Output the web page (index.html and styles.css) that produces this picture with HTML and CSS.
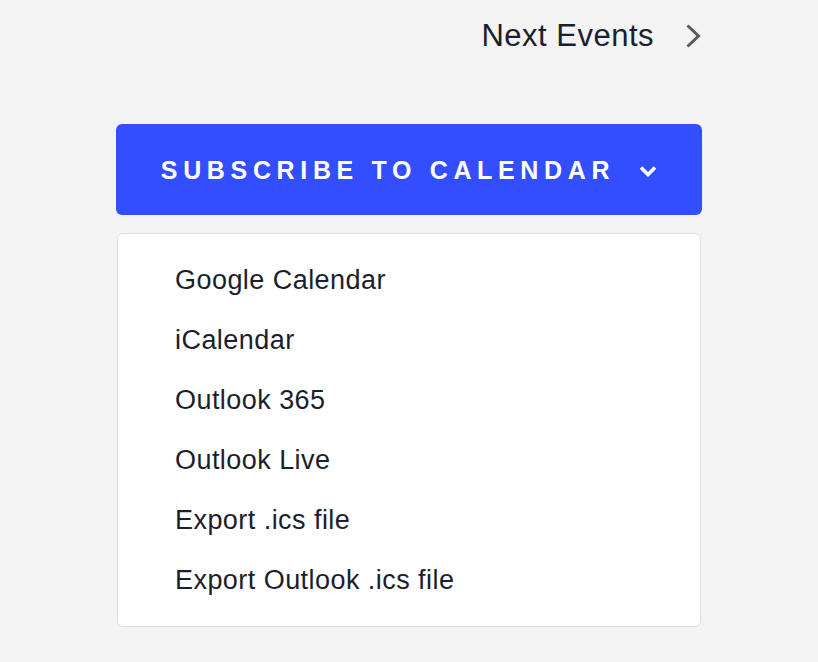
FILE: index.html
```html
<!DOCTYPE html>
<html lang="en">
<head>
<meta charset="utf-8">
<title>Subscribe to calendar</title>
<link rel="stylesheet" href="styles.css">
</head>
<body>
<div class="wrap">
  <nav class="nav">
    <a class="next" href="#">Next Events</a>
    <svg class="next-icon" width="16" height="26" viewBox="0 0 16 26" aria-hidden="true">
      <polyline points="2.5,2.5 13.5,13 2.5,23.5" fill="none" stroke="#5b5b5b" stroke-width="3"/>
    </svg>
  </nav>
  <button class="subscribe" type="button">
    <span class="subscribe-label">Subscribe to calendar</span>
    <svg class="caret" width="18" height="12" viewBox="0 0 18 12" aria-hidden="true">
      <polyline points="2,2.5 9,9.5 16,2.5" fill="none" stroke="#ffffff" stroke-width="3.6"/>
    </svg>
  </button>
  <ul class="menu">
    <li class="menu-item">Google Calendar</li>
    <li class="menu-item">iCalendar</li>
    <li class="menu-item">Outlook 365</li>
    <li class="menu-item">Outlook Live</li>
    <li class="menu-item">Export .ics file</li>
    <li class="menu-item">Export Outlook .ics file</li>
  </ul>
</div>
</body>
</html>
```
FILE: styles.css
```css
html, body {
  margin: 0;
  padding: 0;
  background: #f3f3f3;
}
body {
  font-family: "Liberation Sans", Arial, Helvetica, sans-serif;
  color: #1b1e2d;
}
.wrap {
  width: 586px;
  margin: 0 auto;
  padding-top: 18px;
}
.nav {
  display: flex;
  justify-content: flex-end;
  align-items: center;
  height: 36px;
  padding-right: 1px;
}
.next {
  font-size: 31px;
  line-height: 36px;
  letter-spacing: 0.5px;
  color: #1b1e2d;
  text-decoration: none;
}
.next-icon {
  margin-left: 31px;
  display: block;
}
.subscribe {
  margin-top: 70px;
  width: 586px;
  height: 91px;
  border: 0;
  border-radius: 6px;
  background: #334eff;
  color: #ffffff;
  display: flex;
  align-items: center;
  justify-content: center;
  padding: 0;
  font-family: inherit;
  cursor: pointer;
}
.subscribe-label {
  font-size: 25px;
  font-weight: 700;
  text-transform: uppercase;
  letter-spacing: 5.65px;
  line-height: 30px;
}
.caret {
  display: block;
  margin-left: 24px;
  margin-top: 2px;
}
.menu {
  list-style: none;
  margin: 18px 1px 0;
  padding: 16px 0;
  background: #ffffff;
  border: 1px solid #dedede;
  border-radius: 6px;
}
.menu-item {
  height: 60px;
  line-height: 60px;
  padding-left: 57px;
  font-size: 27px;
  letter-spacing: 0.45px;
  color: #1b1e2d;
}
```
